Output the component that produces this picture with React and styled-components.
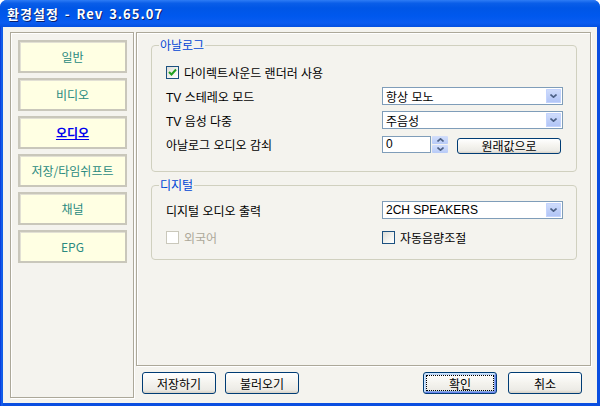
import React from 'react';
import styled, { createGlobalStyle, css } from 'styled-components';

const GlobalStyle = createGlobalStyle`
  html, body {
    margin: 0;
    padding: 0;
    background: #ffffff;
  }
  body {
    font-family: "Liberation Sans", "Noto Sans CJK KR", sans-serif;
    font-size: 12px;
    color: #000;
  }
  #root {
    width: 600px;
    height: 406px;
  }
`;

// Window frame
const Window = styled.div`
  width: 600px;
  height: 406px;
  display: flex;
  flex-direction: column;
  overflow: hidden;
  border-radius: 7px 7px 0 0;
  background: linear-gradient(90deg, #0831d9 0, #166aee 2px, #0a4ee0 3px);
`;

const TitleBar = styled.div`
  height: 27px;
  flex: none;
  display: flex;
  align-items: center;
  padding: 0 0 1px 7px;
  box-sizing: border-box;
  background: linear-gradient(
    180deg,
    #2e7cf5 0%,
    #0a5ee8 12%,
    #0056e6 30%,
    #0058ee 60%,
    #0a5cf0 85%,
    #0450e0 100%
  );
  color: #fff;
  font-family: "Noto Sans CJK KR", sans-serif;
  font-weight: bold;
  font-size: 13px;
  letter-spacing: 1px;
  word-spacing: 2px;
  text-shadow: 1px 1px 0 #0a1f6c;
`;

const Body = styled.div`
  flex: 1;
  display: flex;
  gap: 2px;
  margin: 0 3px 3px;
  padding: 5px 6px 5px 7px;
  background: #f4f3ee;
`;

const EtchedPanel = styled.div`
  box-sizing: border-box;
  border: 1px solid #aca899;
  box-shadow: inset 1px 1px 0 #ffffff, 1px 1px 0 #ffffff;
`;

// Left navigation
const NavPanel = styled(EtchedPanel)`
  width: 124px;
  flex: none;
  display: flex;
  flex-direction: column;
  gap: 5px;
  padding: 7px 6px 0 7px;
`;

const NavButton = styled.div`
  height: 33px;
  box-sizing: border-box;
  display: flex;
  align-items: center;
  justify-content: center;
  background: #ffffe3;
  border: 2px solid #c9c7bb;
  box-shadow: inset 1px 1px 0 #e2e0d4;
  font-family: "Noto Sans CJK KR", sans-serif;
  font-size: 12px;
  color: ${p => (p.$active ? '#0000ee' : '#2a8a80')};
  font-weight: ${p => (p.$active ? 'bold' : 'normal')};
  text-decoration: ${p => (p.$active ? 'underline' : 'none')};
`;

// Right side
const RightColumn = styled.div`
  flex: 1;
  display: flex;
  flex-direction: column;
`;

const SettingsPanel = styled(EtchedPanel)`
  height: 334px;
  flex: none;
  padding: 5px 13px 0 14px;
  display: flex;
  flex-direction: column;
  gap: 6px;
`;

const Group = styled.fieldset`
  margin: 0;
  padding: 0 0 ${p => p.$bottom}px;
  min-width: 0;
  border: 1px solid #d0d0bf;
  border-radius: 4px;
`;

const Legend = styled.legend`
  margin-left: 7px;
  padding: 0 1px;
  line-height: 14px;
  font-family: "Noto Sans CJK KR", sans-serif;
  font-size: 12px;
  color: #0046d5;
`;

const GroupBody = styled.div`
  display: flex;
  flex-direction: column;
  gap: ${p => p.$gap || 0}px;
  padding-top: ${p => p.$top}px;
`;

const Row = styled.div`
  height: 24px;
  display: flex;
  align-items: center;
  padding-left: 14px;
`;

const Label = styled.span`
  width: 216px;
  flex: none;
  white-space: nowrap;
`;

// Checkbox
const CheckWrap = styled.label`
  display: flex;
  align-items: center;
  gap: 5px;
  white-space: nowrap;
  color: ${p => (p.$disabled ? '#aca899' : '#000')};
  ${p => p.$wide && css`width: 216px; flex: none;`}
`;

const Box = styled.span`
  width: 13px;
  height: 13px;
  box-sizing: border-box;
  display: flex;
  align-items: center;
  justify-content: center;
  border: 1px solid ${p => (p.$disabled ? '#cac8bb' : '#1c5180')};
  background: ${p =>
    p.$disabled ? '#ffffff' : 'linear-gradient(135deg, #dcdcd7 0%, #f4f4f0 60%, #ffffff 100%)'};
`;

function Checkbox({ checked, disabled, wide, children }) {
  return (
    <CheckWrap $disabled={disabled} $wide={wide}>
      <Box $disabled={disabled}>
        {checked && (
          <svg width="9" height="9" viewBox="0 0 9 9">
            <path d="M1 4 L3.5 6.5 L8 1.5" fill="none" stroke="#21a121" strokeWidth="2" />
          </svg>
        )}
      </Box>
      {children}
    </CheckWrap>
  );
}

// Combo box
const Combo = styled.div`
  width: 181px;
  height: 18px;
  box-sizing: border-box;
  display: flex;
  align-items: stretch;
  border: 1px solid #7f9db9;
  background: #fff;
`;

const ComboText = styled.span`
  flex: 1;
  padding-left: 3px;
  display: flex;
  align-items: center;
  white-space: nowrap;
`;

const ArrowButton = styled.span`
  width: 15px;
  margin: 1px;
  display: flex;
  align-items: center;
  justify-content: center;
  border-radius: 1px;
  background: linear-gradient(180deg, #d2defb 0%, #bccdf8 60%, #b0c4f6 100%);
  box-shadow: inset 0 0 0 1px #c3d3fd;
`;

const Chevron = ({ up }) => (
  <svg width="7" height="4" viewBox="0 0 7 4">
    <path
      d={up ? 'M0.5 3.5 L3.5 0.8 L6.5 3.5' : 'M0.5 0.5 L3.5 3.2 L6.5 0.5'}
      fill="none"
      stroke="#4d6185"
      strokeWidth="1.6"
    />
  </svg>
);

function Select({ value }) {
  return (
    <Combo>
      <ComboText>{value}</ComboText>
      <ArrowButton>
        <Chevron />
      </ArrowButton>
    </Combo>
  );
}

// Spin edit
const SpinInput = styled.div`
  width: 49px;
  height: 17px;
  box-sizing: border-box;
  border: 1px solid #7f9db9;
  background: #fff;
  padding-left: 3px;
  display: flex;
  align-items: center;
`;

const SpinButtons = styled.div`
  width: 16px;
  height: 17px;
  margin-left: 1px;
  display: flex;
  flex-direction: column;
  gap: 1px;
`;

const SpinHalf = styled.span`
  flex: 1;
  display: flex;
  align-items: center;
  justify-content: center;
  background: linear-gradient(180deg, #d2defb 0%, #b8cbf7 100%);
  border-radius: 1px;
`;

// Push buttons
const XPButton = styled.div`
  box-sizing: border-box;
  width: ${p => p.$w}px;
  height: ${p => p.$h}px;
  flex: none;
  display: flex;
  align-items: center;
  justify-content: center;
  position: relative;
  border: 1px solid #003c74;
  border-radius: 3px;
  background: linear-gradient(180deg, #ffffff 0%, #f4f3ee 50%, #ecebe6 85%, #d6d0c5 100%);
  font-family: "Noto Sans CJK KR", sans-serif;
  font-size: 12px;
  white-space: nowrap;
  ${p =>
    p.$focus &&
    css`
      box-shadow: inset 1px 1px 0 #cee7ff, inset -1px -1px 0 #6982ee, inset 2px 2px 0 #bcd4f6,
        inset -2px -2px 0 #89ade4;
      &::after {
        content: '';
        position: absolute;
        inset: 2px;
        border: 1px dotted #000;
      }
    `}
`;

const ResetButton = styled(XPButton)`
  margin: 3px 0 0 9px;
`;

const ButtonBar = styled.div`
  margin-top: 6px;
  padding: 0 9px 0 6px;
  display: flex;
  justify-content: space-between;
`;

const ButtonGroup = styled.div`
  display: flex;
  gap: ${p => p.$gap}px;
`;

const navItems = ['일반', '비디오', '오디오', '저장/타임쉬프트', '채널', 'EPG'];

export default function App() {
  return (
    <>
      <GlobalStyle />
      <Window>
        <TitleBar>환경설정 - Rev 3.65.07</TitleBar>
        <Body>
          <NavPanel>
            {navItems.map(item => (
              <NavButton key={item} $active={item === '오디오'}>
                {item}
              </NavButton>
            ))}
          </NavPanel>

          <RightColumn>
            <SettingsPanel>
              <Group $bottom={15}>
                <Legend>아날로그</Legend>
                <GroupBody $top={8}>
                  <Row>
                    <Checkbox checked>다이렉트사운드 랜더러 사용</Checkbox>
                  </Row>
                  <Row>
                    <Label>TV 스테레오 모드</Label>
                    <Select value="항상 모노" />
                  </Row>
                  <Row>
                    <Label>TV 음성 다중</Label>
                    <Select value="주음성" />
                  </Row>
                  <Row>
                    <Label>아날로그 오디오 감쇠</Label>
                    <SpinInput>0</SpinInput>
                    <SpinButtons>
                      <SpinHalf>
                        <Chevron up />
                      </SpinHalf>
                      <SpinHalf>
                        <Chevron />
                      </SpinHalf>
                    </SpinButtons>
                    <ResetButton $w={104} $h={16}>
                      원래값으로
                    </ResetButton>
                  </Row>
                </GroupBody>
              </Group>

              <Group $bottom={10}>
                <Legend>디지털</Legend>
                <GroupBody $top={6} $gap={3}>
                  <Row>
                    <Label>디지털 오디오 출력</Label>
                    <Select value="2CH SPEAKERS" />
                  </Row>
                  <Row>
                    <Checkbox disabled wide>
                      외국어
                    </Checkbox>
                    <Checkbox>자동음량조절</Checkbox>
                  </Row>
                </GroupBody>
              </Group>
            </SettingsPanel>

            <ButtonBar>
              <ButtonGroup $gap={9}>
                <XPButton $w={74} $h={22}>저장하기</XPButton>
                <XPButton $w={74} $h={22}>불러오기</XPButton>
              </ButtonGroup>
              <ButtonGroup $gap={11}>
                <XPButton $w={74} $h={22} $focus>
                  확인
                </XPButton>
                <XPButton $w={74} $h={22}>취소</XPButton>
              </ButtonGroup>
            </ButtonBar>
          </RightColumn>
        </Body>
      </Window>
    </>
  );
}
